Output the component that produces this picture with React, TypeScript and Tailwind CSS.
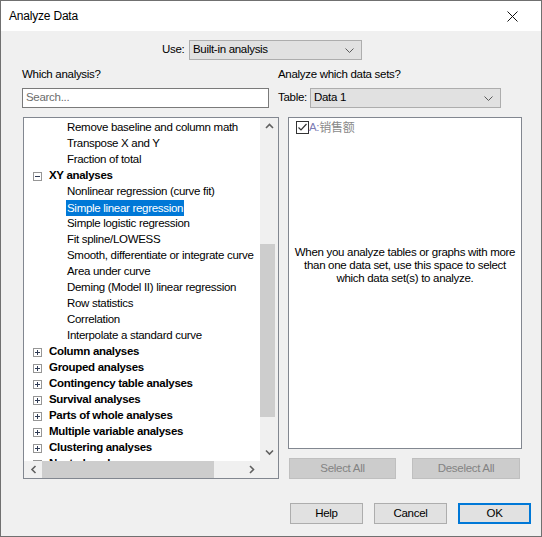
import React from 'react';

const children1 = ['Remove baseline and column math', 'Transpose X and Y', 'Fraction of total'];
const xyItems = [
  'Nonlinear regression (curve fit)',
  'Simple linear regression',
  'Simple logistic regression',
  'Fit spline/LOWESS',
  'Smooth, differentiate or integrate curve',
  'Area under curve',
  'Deming (Model II) linear regression',
  'Row statistics',
  'Correlation',
  'Interpolate a standard curve',
];
const groups = [
  'Column analyses',
  'Grouped analyses',
  'Contingency table analyses',
  'Survival analyses',
  'Parts of whole analyses',
  'Multiple variable analyses',
  'Clustering analyses',
  'Nested analyses',
];

function Chevron({ dir, className = '' }: { dir: 'up' | 'down' | 'left' | 'right'; className?: string }) {
  const pts = {
    down: '1,1.5 4.5,5 8,1.5',
    up: '1,5 4.5,1.5 8,5',
    left: '5.5,1 2,4.5 5.5,8',
    right: '2,1 5.5,4.5 2,8',
  }[dir];
  const size = dir === 'up' || dir === 'down' ? { w: 9, h: 7 } : { w: 7, h: 9 };
  return (
    <svg width={size.w} height={size.h} viewBox={`0 0 ${size.w} ${size.h}`} className={className}>
      <polyline points={pts} fill="none" stroke="#606060" strokeWidth="1.6" />
    </svg>
  );
}

function Dropdown({ value, className }: { value: string; className: string }) {
  return (
    <div className={`flex h-[20px] items-center justify-between border border-[#adadad] bg-[#e1e1e1] pl-[3px] pr-[7px] ${className}`}>
      <span>{value}</span>
      <svg width="9" height="5" viewBox="0 0 9 5">
        <polyline points="0.5,0.5 4.5,4.5 8.5,0.5" fill="none" stroke="#5a5a5a" strokeWidth="1" />
      </svg>
    </div>
  );
}

function ExpandBox({ open }: { open: boolean }) {
  return (
    <svg width="9" height="9" viewBox="0 0 9 9" className="shrink-0">
      <rect x="0.5" y="0.5" width="8" height="8" fill="#fff" stroke="#969696" />
      <line x1="2" y1="4.5" x2="7" y2="4.5" stroke="#2f3b55" />
      {!open && <line x1="4.5" y1="2" x2="4.5" y2="7" stroke="#2f3b55" />}
    </svg>
  );
}

function Group({ label, open }: { label: string; open: boolean }) {
  return (
    <div className="flex h-[16px] items-center pl-[9px]">
      <ExpandBox open={open} />
      <span className="ml-[7px] font-bold">{label}</span>
    </div>
  );
}

function Leaf({ label, selected }: { label: string; selected?: boolean }) {
  return (
    <div className="flex h-[16px] items-center pl-[42px]">
      <span className={selected ? 'bg-[#0078d7] px-[1px] leading-[16px] text-white' : 'px-[1px]'}>{label}</span>
    </div>
  );
}

export default function App() {
  return (
    <div className="flex h-[537px] w-[542px] flex-col border border-[#707070] bg-[#f0f0f0] font-['Liberation_Sans',sans-serif] text-[11.5px] tracking-[-0.3px] text-black">
      <div className="flex h-[30px] shrink-0 items-center justify-between bg-white pl-[8px] pr-[23px]">
        <span className="text-[12px] tracking-[-0.2px]">Analyze Data</span>
        <svg width="11" height="11" viewBox="0 0 11 11">
          <path d="M0.5 0.5 L10.5 10.5 M10.5 0.5 L0.5 10.5" stroke="#111" strokeWidth="1" />
        </svg>
      </div>

      <div className="mt-[9px] flex h-[20px] items-center pl-[161px]">
        <span className="w-[27px]">Use:</span>
        <Dropdown value="Built-in analysis" className="w-[173px]" />
      </div>

      <div className="mt-[7px] flex">
        <div className="ml-[21px] flex w-[256px] flex-col">
          <div className="h-[15px] leading-[15px]">Which analysis?</div>
          <div className="mt-[6px] flex h-[20px] w-[247px] items-center border border-[#7a7a7a] bg-white pl-[3px] text-[#6d6d6d]">
            Search...
          </div>
          <div className="ml-[1px] mt-[9px] flex h-[362px] w-[256px] flex-col border border-[#828790] bg-white">
            <div className="flex h-[343px]">
              <div className="w-[236px] overflow-hidden whitespace-nowrap pt-[2px]">
                {children1.map((c) => (
                  <Leaf key={c} label={c} />
                ))}
                <Group label="XY analyses" open />
                {xyItems.map((c) => (
                  <Leaf key={c} label={c} selected={c === 'Simple linear regression'} />
                ))}
                {groups.map((g) => (
                  <Group key={g} label={g} open={false} />
                ))}
              </div>
              <div className="flex w-[18px] flex-col bg-[#f0f0f0]">
                <div className="flex h-[17px] items-center justify-center">
                  <Chevron dir="up" />
                </div>
                <div className="mt-[109px] h-[173px] w-[15px] bg-[#cdcdcd]" />
                <div className="mt-auto flex h-[17px] items-center justify-center">
                  <Chevron dir="down" />
                </div>
              </div>
            </div>
            <div className="flex h-[17px]">
              <div className="flex w-[236px] items-center bg-[#f0f0f0]">
                <div className="flex w-[18px] justify-center">
                  <Chevron dir="left" />
                </div>
                <div className="h-[17px] w-[172px] bg-[#cdcdcd]" />
                <div className="ml-auto flex w-[18px] justify-center">
                  <Chevron dir="right" />
                </div>
              </div>
              <div className="w-[18px] bg-[#f0f0f0]" />
            </div>
          </div>
        </div>

        <div className="flex w-[244px] flex-col">
          <div className="h-[15px] leading-[15px]">Analyze which data sets?</div>
          <div className="mt-[6px] flex h-[20px] items-center">
            <span className="w-[32px]">Table:</span>
            <Dropdown value="Data 1" className="w-[191px]" />
          </div>
          <div className="ml-[10px] mt-[9px] flex h-[332px] w-[234px] flex-col border border-[#828790] bg-white">
            <div className="flex h-[16px] items-center pl-[7px] pt-[3px]">
              <svg width="13" height="13" viewBox="0 0 13 13" className="shrink-0">
                <rect x="0.5" y="0.5" width="12" height="12" fill="#fff" stroke="#333" />
                <polyline points="2.5,6.5 5,9 10.5,3" fill="none" stroke="#333" strokeWidth="1.2" />
              </svg>
              <span className="text-[#7c7cb4]">A:</span>
              <span className="font-['Liberation_Sans','Noto_Sans_CJK_SC',sans-serif] text-[12px] text-[#8a8a8a]">销售额</span>
            </div>
            <div className="mt-[112px] whitespace-nowrap text-center leading-[13px]">
              When you analyze tables or graphs with more
              <br />
              than one data set, use this space to select
              <br />
              which data set(s) to analyze.
            </div>
          </div>
          <div className="mt-[9px] flex">
            <div className="ml-[11px] flex h-[21px] w-[107px] items-center justify-center border border-[#bfbfbf] bg-[#cccccc] text-[#838383]">
              Select All
            </div>
            <div className="ml-[16px] flex h-[21px] w-[108px] items-center justify-center border border-[#bfbfbf] bg-[#cccccc] text-[#838383]">
              Deselect All
            </div>
          </div>
        </div>
      </div>

      <div className="mt-[24px] flex justify-end gap-[11px] pr-[10px]">
        <div className="flex h-[21px] w-[73px] items-center justify-center border border-[#adadad] bg-[#e1e1e1]">Help</div>
        <div className="flex h-[21px] w-[73px] items-center justify-center border border-[#adadad] bg-[#e1e1e1]">Cancel</div>
        <div className="flex h-[21px] w-[73px] items-center justify-center border-2 border-[#0078d7] bg-[#e1e1e1]">OK</div>
      </div>
    </div>
  );
}
